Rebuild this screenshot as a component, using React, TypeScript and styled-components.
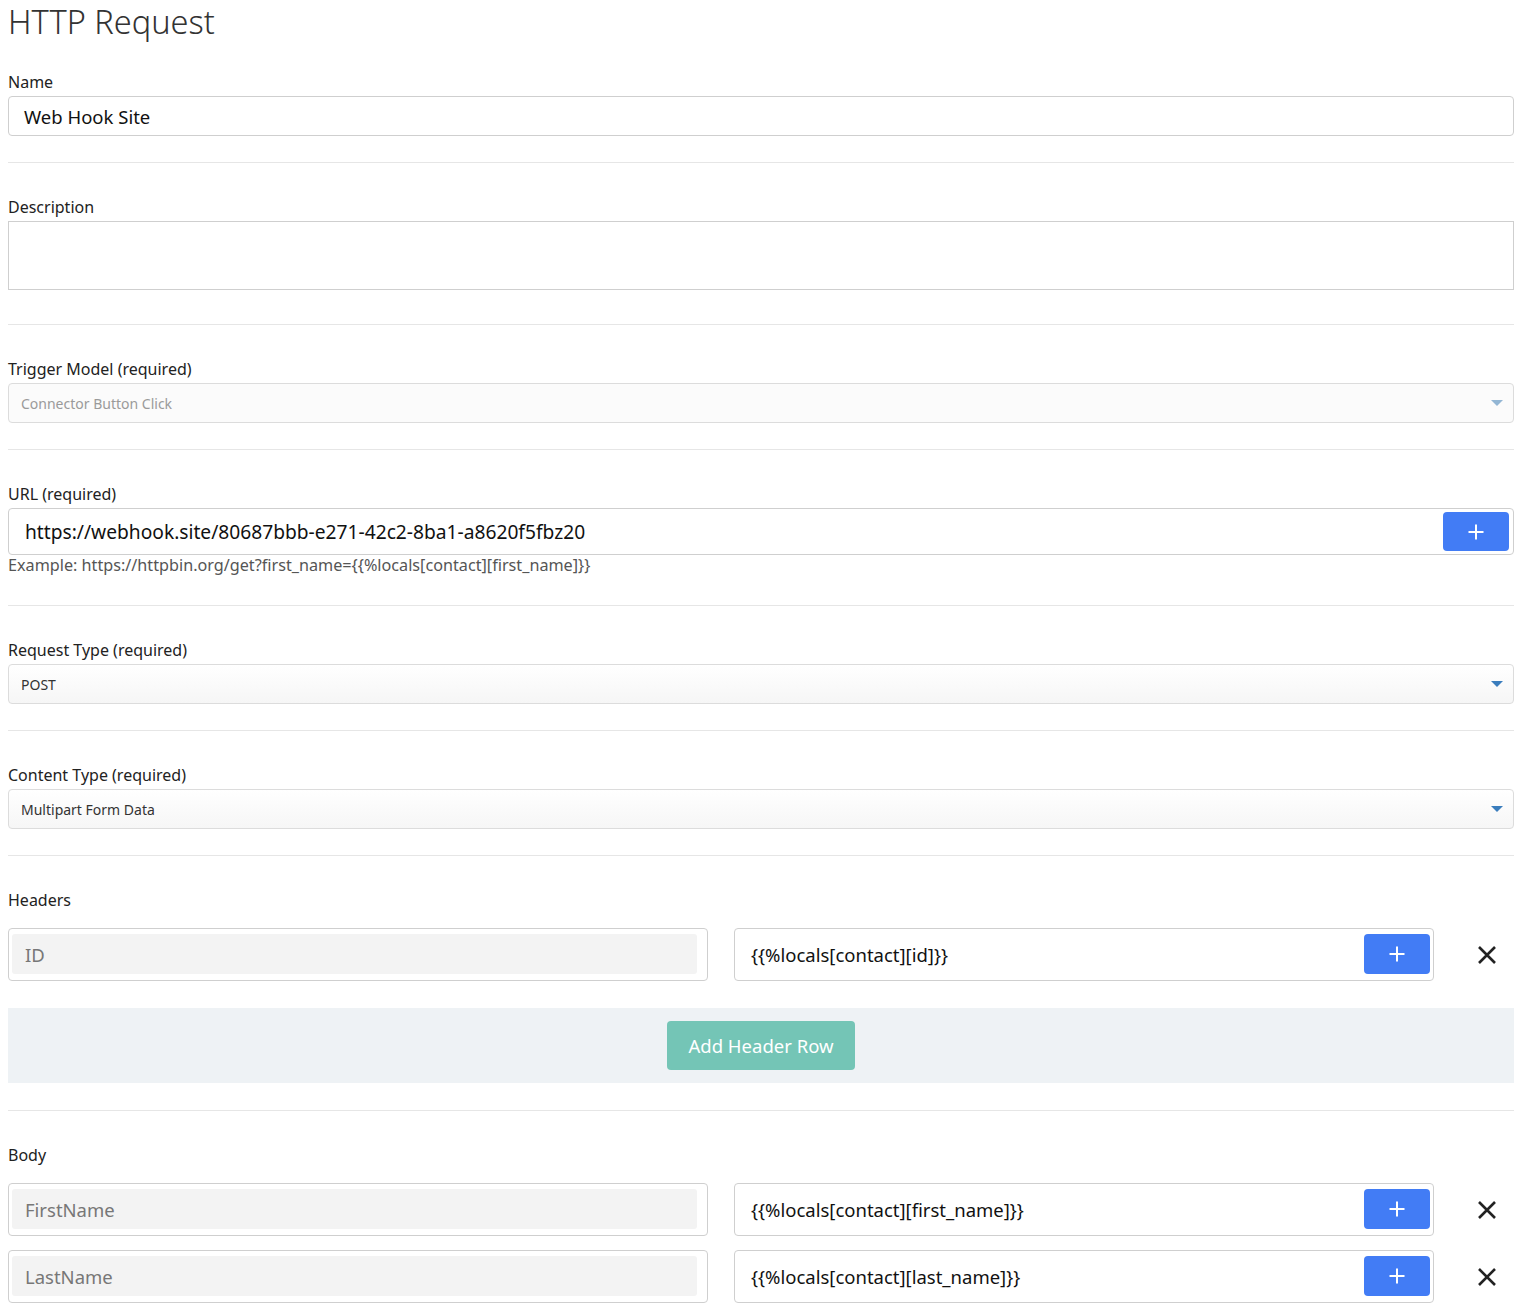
import React from 'react';
import styled, { createGlobalStyle } from 'styled-components';

const GlobalStyle = createGlobalStyle`
  body {
    margin: 0;
    font-family: 'Noto Sans', 'Open Sans', sans-serif;
    color: #333;
    background: #fff;
  }
  * { box-sizing: border-box; }
`;

const Page = styled.div`
  width: 1506px;
  margin-left: 8px;
`;

const Title = styled.h1`
  margin: 0;
  padding-top: 3px;
  height: 46px;
  font-size: 32.5px;
  line-height: 38px;
  font-weight: 300;
  color: #333;
`;

const Section = styled.div<{ $first?: boolean; $loose?: boolean }>`
  padding-top: ${(p) => (p.$first ? '26px' : '34px')};
  padding-bottom: ${(p) => (p.$loose ? '27px' : '26px')};
  border-bottom: 1px solid #e6e6e6;
  &:last-child { border-bottom: none; }
`;

const Label = styled.label<{ $spaced?: boolean }>`
  display: block;
  font-size: 16px;
  line-height: 20px;
  margin-bottom: ${(p) => (p.$spaced ? '18px' : '4px')};
  color: #222;
`;

const TextInput = styled.div<{ $tall?: boolean }>`
  display: flex;
  align-items: center;
  height: ${(p) => (p.$tall ? '47px' : '40px')};
  border: 1px solid #cfcfcf;
  border-radius: 4px;
  padding: 0 4px 0 15px;
  font-size: 18.5px;
  color: #111;
  background: #fff;
`;

const InputText = styled.span<{ $size?: number }>`
  flex: 1;
  font-size: ${(p) => (p.$size ? `${p.$size}px` : 'inherit')};
`;

const TextArea = styled.div`
  height: 69px;
  border: 1px solid #cfcfcf;
  margin-bottom: 8px;
`;

const SelectBox = styled.div<{ $disabled?: boolean }>`
  display: flex;
  align-items: center;
  height: 40px;
  border: 1px solid #dcdcdc;
  border-radius: 4px;
  padding: 0 10px 0 12px;
  font-size: 14px;
  color: ${(p) => (p.$disabled ? '#9a9a9a' : '#333')};
  background: ${(p) => (p.$disabled ? '#fbfbfb' : 'linear-gradient(#ffffff, #f6f6f6)')};
`;

const Caret = styled.span<{ $disabled?: boolean }>`
  width: 0;
  height: 0;
  border-left: 6px solid transparent;
  border-right: 6px solid transparent;
  border-top: 6px solid ${(p) => (p.$disabled ? '#93b6d4' : '#3a7dbd')};
  margin-left: auto;
`;

const PlusButton = styled.button<{ $height?: number }>`
  width: 66px;
  height: ${(p) => p.$height ?? 40}px;
  border: none;
  border-radius: 4px;
  background: #427cf5;
  color: #fff;
  display: flex;
  align-items: center;
  justify-content: center;
  padding: 0;
  cursor: pointer;
`;

const HelpText = styled.div`
  font-size: 16.2px;
  line-height: 20px;
  color: #555;
  margin-bottom: 4px;
`;

const KVRow = styled.div`
  display: grid;
  grid-template-columns: 700px 700px 80px;
  column-gap: 26px;
  align-items: center;
  & + & { margin-top: 14px; }
`;

const KeyBox = styled.div`
  height: 53px;
  border: 1px solid #cfcfcf;
  border-radius: 4px;
  padding: 5px 10px 6px 3px;
`;

const KeyField = styled.div`
  height: 40px;
  background: #f3f3f3;
  border-radius: 3px;
  display: flex;
  align-items: center;
  padding-left: 13px;
  font-size: 18.5px;
  color: #777;
`;

const ValueBox = styled.div`
  height: 53px;
  border: 1px solid #cfcfcf;
  border-radius: 4px;
  padding: 5px 3px 6px 16px;
  display: flex;
  align-items: center;
  font-size: 18.5px;
  color: #111;
`;

const RemoveButton = styled.button`
  border: none;
  background: none;
  padding: 0;
  margin-left: 17px;
  width: 20px;
  height: 20px;
  display: flex;
  align-items: center;
  justify-content: center;
  cursor: pointer;
`;

const Band = styled.div`
  margin-top: 27px;
  height: 75px;
  background: #eef2f5;
  display: flex;
  align-items: center;
  justify-content: center;
`;

const AddRowButton = styled.button`
  height: 49px;
  padding: 0 21px;
  border: none;
  border-radius: 4px;
  background: #74c5b6;
  color: #fff;
  font-family: inherit;
  font-size: 18.5px;
  cursor: pointer;
`;

const PlusIcon = () => (
  <svg width="18" height="18" viewBox="0 0 18 18">
    <path d="M9 1.5v15M1.5 9h15" stroke="#fff" strokeWidth="2" />
  </svg>
);

const CrossIcon = () => (
  <svg width="20" height="20" viewBox="0 0 20 20">
    <path d="M2 2l16 16M18 2L2 18" stroke="#222" strokeWidth="2.6" />
  </svg>
);

function KeyValueRow({ name, value }: { name: string; value: string }) {
  return (
    <KVRow>
      <KeyBox>
        <KeyField>{name}</KeyField>
      </KeyBox>
      <ValueBox>
        <InputText>{value}</InputText>
        <PlusButton>
          <PlusIcon />
        </PlusButton>
      </ValueBox>
      <RemoveButton>
        <CrossIcon />
      </RemoveButton>
    </KVRow>
  );
}

export default function App() {
  return (
    <>
      <GlobalStyle />
      <Page>
        <Title>HTTP Request</Title>
        <Section $first>
          <Label>Name</Label>
          <TextInput>
            <InputText>Web Hook Site</InputText>
          </TextInput>
        </Section>
        <Section>
          <Label>Description</Label>
          <TextArea />
        </Section>
        <Section>
          <Label>Trigger Model (required)</Label>
          <SelectBox $disabled>
            Connector Button Click
            <Caret $disabled />
          </SelectBox>
        </Section>
        <Section>
          <Label>URL (required)</Label>
          <TextInput $tall>
            <InputText $size={19.2} style={{ paddingLeft: 1 }}>
              https://webhook.site/80687bbb-e271-42c2-8ba1-a8620f5fbz20
            </InputText>
            <PlusButton $height={39}>
              <PlusIcon />
            </PlusButton>
          </TextInput>
          <HelpText>Example: https://httpbin.org/get?first_name={'{{'}%locals[contact][first_name]{'}}'}</HelpText>
        </Section>
        <Section>
          <Label>Request Type (required)</Label>
          <SelectBox>
            POST
            <Caret />
          </SelectBox>
        </Section>
        <Section>
          <Label>Content Type (required)</Label>
          <SelectBox>
            Multipart Form Data
            <Caret />
          </SelectBox>
        </Section>
        <Section $loose>
          <Label $spaced>Headers</Label>
          <KeyValueRow name="ID" value="{{%locals[contact][id]}}" />
          <Band>
            <AddRowButton>Add Header Row</AddRowButton>
          </Band>
        </Section>
        <Section>
          <Label $spaced>Body</Label>
          <KeyValueRow name="FirstName" value="{{%locals[contact][first_name]}}" />
          <KeyValueRow name="LastName" value="{{%locals[contact][last_name]}}" />
        </Section>
      </Page>
    </>
  );
}
